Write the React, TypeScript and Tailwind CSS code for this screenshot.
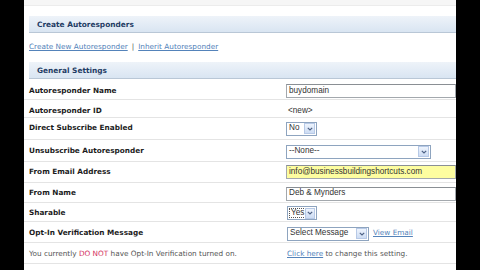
import React from "react";

const label = "font-['DejaVu_Sans',sans-serif] text-[7.3px] font-bold text-[#1c1c1c]";
const val = "font-['Liberation_Sans',Arial,sans-serif] text-[8.2px] text-[#333]";

function Arrow() {
  return (
    <span className="flex h-[11px] w-[11px] items-center justify-center border border-[#b7c9e6] bg-gradient-to-b from-[#eef4fd] to-[#cddcf3]">
      <svg width="6" height="4" viewBox="0 0 6 4" fill="none">
        <path d="M0.8 0.8 L3 3 L5.2 0.8" stroke="#4d6185" strokeWidth="1.2" />
      </svg>
    </span>
  );
}

function Select({ text, width, focus }: { text: string; width: string; focus?: boolean }) {
  return (
    <div className={`flex h-[14px] items-center justify-between border border-[#8ea4bf] bg-white pl-[2px] pr-[1px] ${width}`}>
      <span className={`${val} leading-none ${focus ? "outline outline-1 outline-dotted outline-[#555] px-[1px]" : ""}`}>{text}</span>
      <Arrow />
    </div>
  );
}

function Input({ text, yellow }: { text: string; yellow?: boolean }) {
  return (
    <div
      className={`flex h-[14px] w-full items-center border border-[#a3a8ad] border-t-[#8a8f94] pl-[2px] ${yellow ? "bg-[#fdfda0]" : "bg-white"}`}
    >
      <span className={`${val} leading-none`}>{text}</span>
    </div>
  );
}

function Row({ name, h, children }: { name: string; h: string; children: React.ReactNode }) {
  return (
    <div className={`flex items-center border-b border-[#e4e4e4] ${h}`}>
      <div className={`w-[262px] pl-[5px] ${label}`}>{name}</div>
      <div className="flex flex-1 items-center">{children}</div>
    </div>
  );
}

function Bar({ title }: { title: string }) {
  return (
    <div className="flex h-[17px] items-center border-b border-[#b9c7d6] bg-gradient-to-b from-[#eef3f9] to-[#d9e5f2] pl-[8px] pt-[2px]">
      <span className="font-['DejaVu_Sans',sans-serif] text-[7.4px] font-bold text-[#1f3c64]">{title}</span>
    </div>
  );
}

export default function App() {
  return (
    <div className="flex h-[270px] w-[480px] overflow-hidden bg-black">
      <div className="w-[24px] shrink-0" />
      <div className="flex w-[432px] shrink-0 flex-col bg-white">
        <div className="h-[6px] border-b border-[#ececec] bg-[#f6f6f6]" />
        <div className="h-[10px]" />
        <div className="pl-[5px]">
          <Bar title="Create Autoresponders" />
        </div>
        <div className="flex h-[29px] items-center pl-[5px] font-['DejaVu_Sans',sans-serif] text-[7.3px] text-[#5483ba]">
          <span className="underline">Create New Autoresponder</span>
          <span className="px-[4px] text-[#555] no-underline">|</span>
          <span className="underline">Inherit Autoresponder</span>
        </div>
        <div className="pl-[5px]">
          <Bar title="General Settings" />
        </div>
        <div className="h-[1px]" />
        <Row name="Autoresponder Name" h="h-[20px] pt-[3px]">
          <Input text="buydomain" />
        </Row>
        <Row name="Autoresponder ID" h="h-[18px] pt-[6px]">
          <span className={`${val} pl-[2px]`}>&lt;new&gt;</span>
        </Row>
        <Row name="Direct Subscribe Enabled" h="h-[22px]">
          <Select text="No" width="w-[31px]" />
        </Row>
        <Row name="Unsubscribe Autoresponder" h="h-[22px] pt-[2px]">
          <Select text="--None--" width="w-[145px]" />
        </Row>
        <Row name="From Email Address" h="h-[21px]">
          <Input text="info@businessbuildingshortcuts.com" yellow />
        </Row>
        <Row name="From Name" h="h-[20px] pt-[2px]">
          <Input text="Deb & Mynders" />
        </Row>
        <Row name="Sharable" h="h-[19px] pt-[2px]">
          <div className="pl-[1px]">
            <Select text="Yes" width="w-[30px]" focus />
          </div>
        </Row>
        <Row name="Opt-In Verification Message" h="h-[21px] pt-[3px]">
          <div className="flex items-center gap-[4px] pl-[1px]">
            <Select text="Select Message" width="w-[82px]" />
            <span className="font-['DejaVu_Sans',sans-serif] text-[7.3px] text-[#5483ba] underline">View Email</span>
          </div>
        </Row>
        <div className="flex h-[21px] items-center border-b border-[#e4e4e4] pt-[3px] font-['DejaVu_Sans',sans-serif] text-[7.3px] text-[#555]">
          <div className="w-[262px] pl-[5px]">
            You currently <span className="text-[#d4305e]">DO NOT</span> have Opt-In Verification turned on.
          </div>
          <div className="flex-1 pl-[1px]">
            <span className="text-[#5483ba] underline">Click here</span> to change this setting.
          </div>
        </div>
      </div>
      <div className="flex-1" />
    </div>
  );
}
